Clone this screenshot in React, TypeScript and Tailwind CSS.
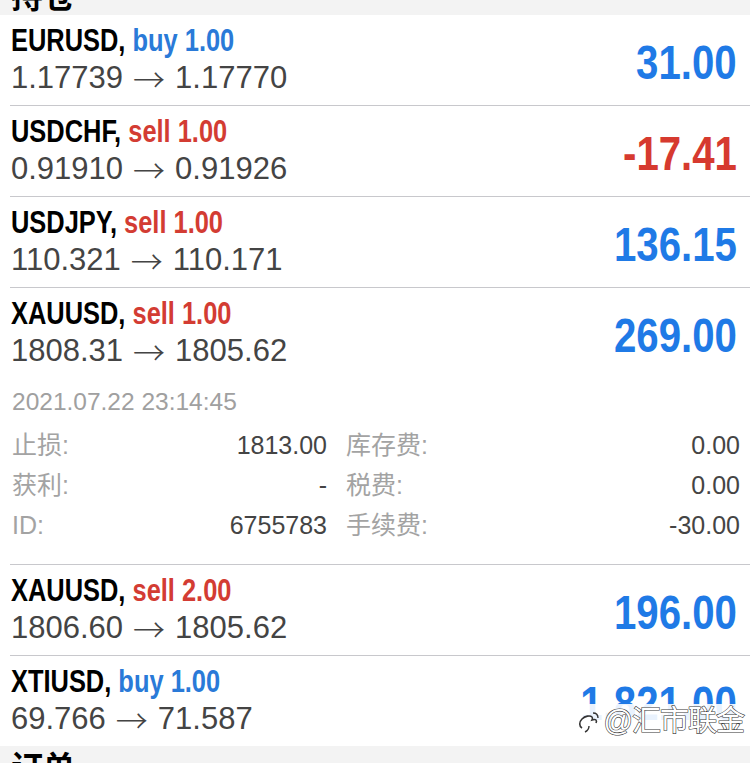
import React from "react";

type Pos = {
  sym: string;
  side: "buy" | "sell";
  vol: string;
  from: string;
  to: string;
  profit: string;
};

const positions: Pos[] = [
  { sym: "EURUSD", side: "buy", vol: "1.00", from: "1.17739", to: "1.17770", profit: "31.00" },
  { sym: "USDCHF", side: "sell", vol: "1.00", from: "0.91910", to: "0.91926", profit: "-17.41" },
  { sym: "USDJPY", side: "sell", vol: "1.00", from: "110.321", to: "110.171", profit: "136.15" },
  { sym: "XAUUSD", side: "sell", vol: "1.00", from: "1808.31", to: "1805.62", profit: "269.00" },
  { sym: "XAUUSD", side: "sell", vol: "2.00", from: "1806.60", to: "1805.62", profit: "196.00" },
  { sym: "XTIUSD", side: "buy", vol: "1.00", from: "69.766", to: "71.587", profit: "1,821.00" },
];

const sans = "font-['Liberation_Sans','Noto_Sans_CJK_SC',sans-serif]";

function Row({ p, children }: { p: Pos; children?: React.ReactNode }) {
  const neg = p.profit.startsWith("-");
  const sideColor = p.side === "buy" ? "text-[#2a7ad8]" : "text-[#d33c33]";
  return (
    <div className="relative">
      <div className="flex items-center h-[90px] pl-[11px] pr-[13px]">
        <div className="flex-1 flex flex-col">
          <div
            className={`${sans} h-[36px] origin-left scale-x-[0.82] font-bold text-[31px] leading-[36px] text-black whitespace-nowrap`}
          >
            {p.sym},{" "}
            <span className={sideColor}>
              {p.side} {p.vol}
            </span>
          </div>
          <div
            className={`${sans} h-[38px] overflow-visible flex items-center text-[31px] leading-[38px] text-[#444444] whitespace-nowrap`}
          >
            <span>{p.from}</span>
            <span className="mx-[10px] text-[32px] font-['Noto_Sans_CJK_SC',sans-serif] font-light leading-none">→</span>
            <span>{p.to}</span>
          </div>
        </div>
        <div
          className={`${sans} inline-block origin-right scale-x-[0.82] font-bold text-[49px] leading-[56px] pt-[4px] whitespace-nowrap ${
            neg ? "text-[#d63a2f]" : "text-[#1f7ae6]"
          }`}
        >
          {p.profit}
        </div>
      </div>
      {children}
    </div>
  );
}

function Divider() {
  return <div className="ml-[10px] h-px bg-[#c8c8cc]" />;
}

function Details() {
  const label = "text-[#a3a3a3]";
  const value = "text-[#444444]";
  return (
    <div className={`${sans} pb-[19px]`}>
      <div className="pl-[12px] pt-[4px] h-[47px] text-[24.5px] leading-[40px] text-[#a0a0a0]">
        2021.07.22 23:14:45
      </div>
      <div className="grid grid-cols-[315px_1fr] gap-x-[19px] pl-[12px] pr-[10px] text-[25px] leading-[40px]">
        <div className="flex justify-between">
          <span className={label}>止损:</span>
          <span className={value}>1813.00</span>
        </div>
        <div className="flex justify-between">
          <span className={label}>库存费:</span>
          <span className={value}>0.00</span>
        </div>
        <div className="flex justify-between">
          <span className={label}>获利:</span>
          <span className={value}>-</span>
        </div>
        <div className="flex justify-between">
          <span className={label}>税费:</span>
          <span className={value}>0.00</span>
        </div>
        <div className="flex justify-between">
          <span className={label}>ID:</span>
          <span className={value}>6755783</span>
        </div>
        <div className="flex justify-between">
          <span className={label}>手续费:</span>
          <span className={value}>-30.00</span>
        </div>
      </div>
    </div>
  );
}

function Watermark() {
  return (
    <div className="absolute right-[4px] bottom-[8px] flex items-center gap-[2px] bg-white/90 pl-[6px] pr-[2px] h-[34px]">
      <svg width="26" height="26" viewBox="0 0 26 26" fill="none">
        <path
          d="M6 20c-3-2-3-6 0-9 3-3 8-4 10-2 1 1 0 3 0 3s3-1 4 0c1 1 0 3 0 3"
          stroke="#333"
          strokeWidth="1.6"
          fill="white"
        />
        <path d="M9 24c2-1 4-3 4-6" stroke="#333" strokeWidth="1.4" />
        <path d="M17 5c3 0 5 2 5 5" stroke="#333" strokeWidth="1.4" />
      </svg>
      <span
        className={`${sans} text-[29px] leading-none text-white [-webkit-text-stroke:1.2px_#3a3a3a] [paint-order:stroke_fill] tracking-[-1px]`}
      >
        @汇市联金
      </span>
    </div>
  );
}

export default function App() {
  return (
    <div className="w-[750px] h-[763px] overflow-hidden bg-white">
      <div className="h-[15px] overflow-hidden bg-[#f3f3f3] pl-[11px]">
        <div className={`${sans} -mt-[21px] text-[32px] leading-[36px] font-bold text-black`}>持仓</div>
      </div>
      <Row p={positions[0]} />
      <Divider />
      <Row p={positions[1]} />
      <Divider />
      <Row p={positions[2]} />
      <Divider />
      <Row p={positions[3]} />
      <Details />
      <Divider />
      <Row p={positions[4]} />
      <Divider />
      <Row p={positions[5]}>
        <Watermark />
      </Row>
      <div className="h-[40px] bg-[#f3f3f3] pl-[11px] pt-[4px]">
        <div className={`${sans} text-[32px] leading-[36px] font-bold text-black`}>订单</div>
      </div>
    </div>
  );
}
